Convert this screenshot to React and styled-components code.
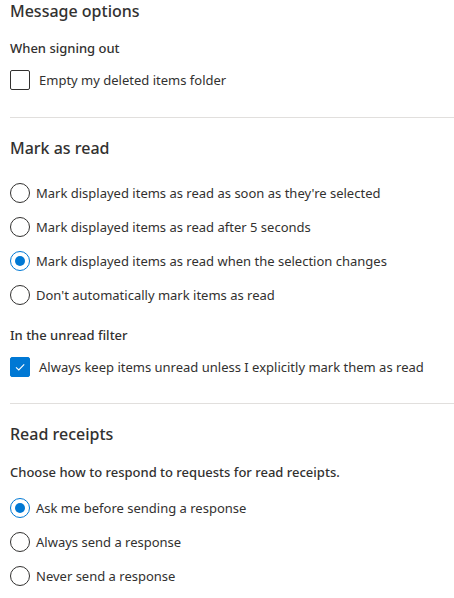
import React from "react";
import styled, { createGlobalStyle } from "styled-components";

const Global = createGlobalStyle`
  html, body { margin: 0; padding: 0; background: #ffffff; }
  body { font-family: "Noto Sans", "Open Sans", sans-serif; color: #323130; }
`;

const Page = styled.div`
  width: 454px;
  display: flex;
  flex-direction: column;
`;

const Section = styled.section`
  display: flex;
  flex-direction: column;
  padding-left: 10px;
`;

const Title = styled.h2`
  margin: ${(p) => p.$mt || 0}px 0 0;
  font-size: 16px;
  font-weight: 500;
  line-height: 22px;
  color: #323130;
`;

const SubHeading = styled.div`
  margin-top: ${(p) => p.$mt}px;
  font-size: 13px;
  font-weight: 500;
  line-height: 20px;
  color: #323130;
`;

const OptionList = styled.div`
  display: flex;
  flex-direction: column;
  margin-top: ${(p) => p.$mt}px;
`;

const Row = styled.label`
  display: flex;
  align-items: center;
  gap: 6px;
  height: 34px;
  font-size: 13px;
  color: #323130;
  cursor: pointer;
`;

const Box = styled.span`
  width: 20px;
  height: 20px;
  box-sizing: border-box;
  border-radius: 2px;
  border: 1px solid ${(p) => (p.$checked ? "#0078d4" : "#323130")};
  background: ${(p) => (p.$checked ? "#0078d4" : "#fff")};
  display: flex;
  align-items: center;
  justify-content: center;
  flex: none;
  margin-right: 3px;
`;

const Radio = styled.span`
  width: 20px;
  height: 20px;
  box-sizing: border-box;
  border-radius: 50%;
  border: 1px solid ${(p) => (p.$checked ? "#0078d4" : "#323130")};
  display: flex;
  align-items: center;
  justify-content: center;
  flex: none;
  &::after {
    content: "";
    display: ${(p) => (p.$checked ? "block" : "none")};
    width: 10px;
    height: 10px;
    border-radius: 50%;
    background: #0078d4;
  }
`;

const Divider = styled.hr`
  margin: ${(p) => p.$mt}px 0 0 10px;
  border: none;
  border-top: 1px solid #e1dfdd;
  height: 0;
`;

const Check = () => (
  <svg width="12" height="12" viewBox="0 0 12 12">
    <path d="M2 6.3 L4.8 9 L10.2 3.3" fill="none" stroke="#fff" strokeWidth="1.1" />
  </svg>
);

const CheckRow = ({ checked, children }) => (
  <Row>
    <Box $checked={checked}>{checked && <Check />}</Box>
    {children}
  </Row>
);

const RadioRow = ({ checked, children }) => (
  <Row>
    <Radio $checked={checked} />
    {children}
  </Row>
);

export default function App() {
  return (
    <>
      <Global />
      <Page>
        <Section>
          <Title>Message options</Title>
          <SubHeading $mt={16}>When signing out</SubHeading>
          <OptionList $mt={5}>
            <CheckRow>Empty my deleted items folder</CheckRow>
          </OptionList>
        </Section>
        <Divider $mt={20} />
        <Section>
          <Title $mt={19}>Mark as read</Title>
          <OptionList $mt={17}>
            <RadioRow>Mark displayed items as read as soon as they're selected</RadioRow>
            <RadioRow>Mark displayed items as read after 5 seconds</RadioRow>
            <RadioRow checked>Mark displayed items as read when the selection changes</RadioRow>
            <RadioRow>Don't automatically mark items as read</RadioRow>
          </OptionList>
          <SubHeading $mt={13}>In the unread filter</SubHeading>
          <OptionList $mt={5}>
            <CheckRow checked>Always keep items unread unless I explicitly mark them as read</CheckRow>
          </OptionList>
        </Section>
        <Divider $mt={19} />
        <Section>
          <Title $mt={19}>Read receipts</Title>
          <SubHeading $mt={17}>Choose how to respond to requests for read receipts.</SubHeading>
          <OptionList $mt={9}>
            <RadioRow checked>Ask me before sending a response</RadioRow>
            <RadioRow>Always send a response</RadioRow>
            <RadioRow>Never send a response</RadioRow>
          </OptionList>
        </Section>
      </Page>
    </>
  );
}
